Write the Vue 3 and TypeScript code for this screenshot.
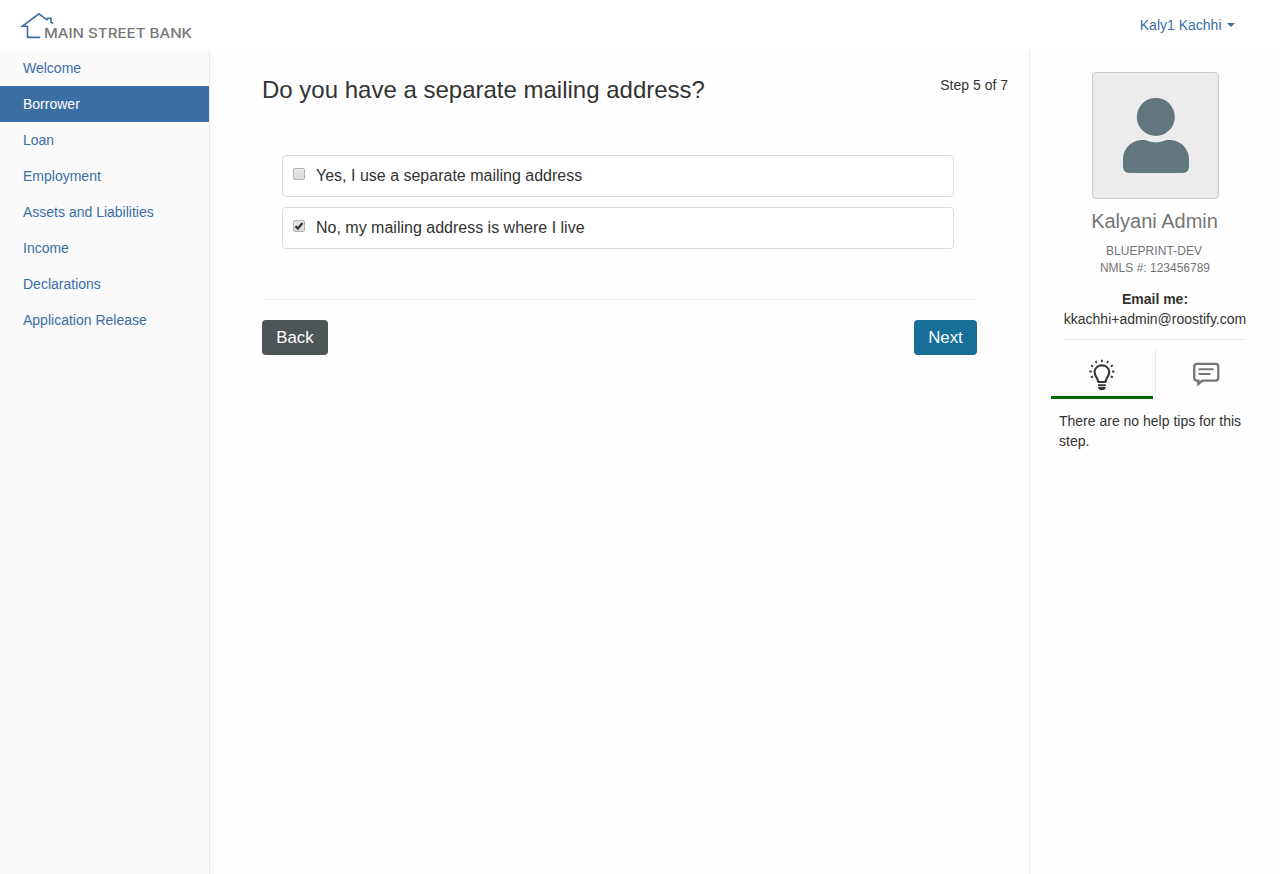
<script setup lang="ts">
import { ref } from 'vue'

const sections: string[] = [
  'Welcome',
  'Borrower',
  'Loan',
  'Employment',
  'Assets and Liabilities',
  'Income',
  'Declarations',
  'Application Release',
]
const active = ref('Borrower')

const options: { id: string; label: string }[] = [
  { id: 'yes', label: 'Yes, I use a separate mailing address' },
  { id: 'no', label: 'No, my mailing address is where I live' },
]
const selected = ref('no')
const tab = ref<'tips' | 'chat'>('tips')
</script>

<template>
  <div class="page">
    <header class="header">
      <svg class="logo" width="174" height="30" viewBox="20 11 174 30" role="img" aria-label="Main Street Bank">
        <path d="M40.2 37.4H27.5V26.3H22.2L39 13.8L46.8 19.8L47.4 18.4H51V22.3L53.3 23.4" fill="none" stroke="#3b6ea5" stroke-width="1.6" />
        <text x="44" y="38" class="logo-text" textLength="148" lengthAdjust="spacingAndGlyphs">MAIN STREET BANK</text>
      </svg>
      <a class="user">Kaly1 Kachhi<span class="caret"></span></a>
    </header>

    <div class="body">
      <nav class="sidebar">
        <a
          v-for="s in sections"
          :key="s"
          class="nav-item"
          :class="{ active: s === active }"
          @click="active = s"
        >{{ s }}</a>
      </nav>

      <main class="main">
        <div class="title-row">
          <h1>Do you have a separate mailing address?</h1>
          <span class="step">Step 5 of 7</span>
        </div>
        <div class="options">
          <div v-for="o in options" :key="o.id" class="option" @click="selected = o.id">
            <span class="check">
              <svg v-if="selected === o.id" width="10" height="10" viewBox="0 0 10 10">
                <path d="M1.5 5.2L3.9 7.5L8.5 1.9" fill="none" stroke="#3a3a3a" stroke-width="2.3" />
              </svg>
            </span>
            <span>{{ o.label }}</span>
          </div>
        </div>
        <div class="actions">
          <button class="btn back">Back</button>
          <button class="btn next">Next</button>
        </div>
      </main>

      <aside class="aside">
        <div class="avatar">
          <svg width="125" height="125" viewBox="1093 73 125 125">
            <circle cx="1155.8" cy="116.9" r="19" fill="#62777d" />
            <path d="M1141.5 140H1145Q1155.8 144.8 1166.6 140H1170.5C1181 140.5 1189 149 1189 159V166.5Q1189 173 1182.5 173H1129.5Q1123 173 1123 166.5V159C1123 149 1131 140.5 1141.5 140Z" fill="#62777d" />
          </svg>
        </div>
        <div class="name">Kalyani Admin</div>
        <div class="org"><span class="company">BLUEPRINT-DEV</span><br />NMLS #: 123456789</div>
        <div class="email"><b>Email me:</b><br />kkachhi+admin@roostify.com</div>
        <div class="tabs">
          <div class="tab" :class="{ on: tab === 'tips' }" @click="tab = 'tips'">
            <svg width="28" height="34" viewBox="1088 358 28 34" fill="none" stroke="#333">
              <path d="M1098.3 382C1098.3 378.5 1094.5 376.5 1094.5 371.5A7.5 7.3 0 0 1 1109.3 371.5C1109.3 376.5 1105.5 378.5 1105.5 382Z" stroke-width="2.1" stroke-linejoin="round" />
              <path d="M1098 385.2H1105.8" stroke-width="1.9" />
              <path d="M1098 387H1105.8Q1105.3 390.2 1101.9 390.2Q1098.5 390.2 1098 387Z" fill="#333" stroke="none" />
              <path d="M1101.9 359.7V361.9M1095.6 361L1096.7 362.9M1108.2 361L1107.1 362.9M1091 365.3L1093 366.5M1112.8 365.3L1110.8 366.5M1089.4 371.5H1091.7M1112.1 371.5H1114.4M1090.9 377.5L1093 376.4M1112.9 377.5L1110.8 376.4" stroke-width="1.8" />
            </svg>
          </div>
          <div class="tab chat" :class="{ on: tab === 'chat' }" @click="tab = 'chat'">
            <svg width="28" height="26" viewBox="1192 362 28 26" fill="none" stroke="#757575">
              <path d="M1197 364.9H1215.5Q1218.3 364.9 1218.3 367.7V378.8Q1218.3 381.6 1215.5 381.6H1202.5L1198.3 385V381.6H1197Q1194.2 381.6 1194.2 378.8V367.7Q1194.2 364.9 1197 364.9Z" stroke-width="2.3" />
              <path d="M1198.5 370.2H1213.5M1198.5 375H1210.5" stroke-width="2" />
            </svg>
          </div>
        </div>
        <p class="tips">There are no help tips for this step.</p>
      </aside>
    </div>
  </div>
</template>

<style>
body {
  background: #fefefe;
}
</style>

<style scoped>
.page,
.page * {
  box-sizing: border-box;
}
.page {
  height: 874px;
  display: flex;
  flex-direction: column;
  overflow: hidden;
  font: 14px/20px "Liberation Sans", Arial, sans-serif;
  color: #333;
}
.header {
  flex: 0 0 50px;
  display: flex;
  justify-content: space-between;
  align-items: flex-start;
  padding: 11px 45px 0 20px;
  background: #fff;
}
.logo {
  display: block;
}
.logo-text {
  font: 500 12.8px Inter, sans-serif;
  fill: #757575;
}
.user {
  display: flex;
  align-items: center;
  margin-top: 4px;
  color: #3b6ea5;
}
.caret {
  margin-left: 5.5px;
  border-top: 4px solid #3b6ea5;
  border-left: 4px solid transparent;
  border-right: 4px solid transparent;
}
.body {
  flex: 1;
  display: flex;
}
.sidebar {
  width: 210px;
  background: #fafafa;
  border-right: 1px solid #eaeaea;
  box-shadow: 0 0 12px rgba(0, 0, 0, 0.02);
}
.nav-item {
  display: block;
  padding: 8px 23px;
  color: #3b6ea5;
  cursor: pointer;
}
.nav-item.active {
  background: #3b6ea5;
  color: #fff;
}
.main {
  width: 819px;
  padding: 25px 21px 0 52px;
}
.title-row {
  display: flex;
  justify-content: space-between;
  height: 80px;
}
h1 {
  margin: 0;
  font-size: 24px;
  line-height: 30px;
  font-weight: 400;
}
.options {
  display: flex;
  flex-direction: column;
  gap: 10px;
  margin: 0 54px 50px 20px;
}
.option {
  display: flex;
  align-items: center;
  height: 42px;
  padding-left: 10px;
  border: 1px solid #ddd;
  border-radius: 4px;
  font-size: 16px;
  background: #fff;
}
.check {
  width: 12px;
  height: 12px;
  margin: 0 11px 4px 0;
  border: 1px solid #b3b3b3;
  border-radius: 2px;
  background: linear-gradient(#e9e9e9, #dcdcdc);
}
.check svg {
  display: block;
}
.actions {
  display: flex;
  justify-content: space-between;
  margin-right: 31px;
  padding-top: 20px;
  border-top: 1px solid #eee;
}
.btn {
  height: 35px;
  padding: 0;
  border: 0;
  border-radius: 4px;
  font: 16.8px/35px "Liberation Sans", Arial, sans-serif;
  color: #fff;
}
.back {
  width: 66px;
  background: #4d5557;
}
.next {
  width: 63px;
  background: #176f98;
}
.aside {
  width: 251px;
  padding: 22px 0 0 21px;
  border-left: 1px solid #eaeaea;
  background: #fefefe;
  box-shadow: 0 0 12px rgba(0, 0, 0, 0.02);
}
.avatar {
  width: 127px;
  height: 127px;
  margin-left: 41px;
  border: 1px solid #ccc;
  border-radius: 4px;
  background: #ececec;
}
.avatar svg {
  display: block;
}
.name,
.org,
.email {
  width: 208px;
  text-align: center;
}
.name {
  width: 207px;
  margin-top: 10px;
  font-size: 20px;
  line-height: 24px;
  color: #757575;
}
.org {
  margin-top: 10px;
  font-size: 12px;
  line-height: 17px;
  color: #757575;
}
.company {
  margin-right: 2px;
  letter-spacing: 0.05px;
}
.email {
  margin-top: 12px;
}
.tabs {
  display: flex;
  width: 208px;
  height: 60px;
  padding-top: 10px;
  margin-top: 10px;
  background: linear-gradient(#eaeaea, #eaeaea) 13px 0 / 181px 1px no-repeat;
}
.tab {
  width: 102px;
  height: 50px;
  display: flex;
  justify-content: center;
  padding-top: 9px;
  border-bottom: 3px solid transparent;
}
.tab.on {
  border-bottom-color: #006a00;
}
.tab.chat {
  margin-left: 2px;
  width: 104px;
  padding: 12px 4px 0 0;
  border-left: 1px solid #eaeaea;
}
.tips {
  margin: 12px 0 0 8px;
  width: 190px;
}
</style>
